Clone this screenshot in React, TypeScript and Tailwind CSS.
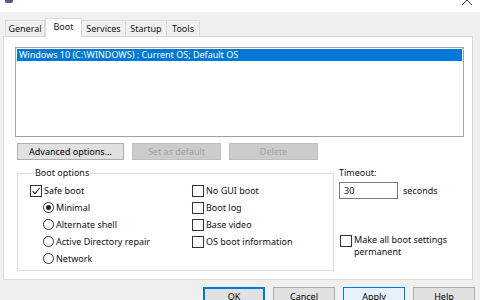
import type { ReactNode } from "react"

function CheckBox({ checked = false }: { checked?: boolean }) {
  return (
    <span className="w-[12px] h-[12px] border border-[#333333] bg-white flex items-center justify-center shrink-0">
      {checked && (
        <svg width="10" height="10" viewBox="0 0 10 10">
          <path d="M1.5 5.2 L4 7.6 L8.6 2" fill="none" stroke="#222" strokeWidth="1.1" />
        </svg>
      )}
    </span>
  )
}

function Radio({ checked = false }: { checked?: boolean }) {
  return (
    <span className="w-[11px] h-[11px] rounded-full border border-[#333333] bg-white flex items-center justify-center shrink-0">
      {checked && <span className="w-[5px] h-[5px] rounded-full bg-[#222222]" />}
    </span>
  )
}

function Row({ children }: { children: ReactNode }) {
  return <div className="h-[17px] flex items-center gap-[2px]">{children}</div>
}

function Btn({ label, w, h = "h-[17px]", kind = "normal" }: { label: string; w: string; h?: string; kind?: "normal" | "disabled" | "default" | "hover" }) {
  const styles = {
    normal: "bg-[#e1e1e1] border-[#adadad] text-black",
    disabled: "bg-[#cccccc] border-[#bfbfbf] text-[#a3a3a3]",
    default: "bg-[#e1e1e1] border-[#0078d7] border-2 text-black",
    hover: "bg-[#e5f1fb] border-[#0078d7] text-black",
  }
  return (
    <div className={`${w} ${h} border flex items-center justify-center shrink-0 ${styles[kind]}`}>
      {label}
    </div>
  )
}

export default function App() {
  return (
    <div className="w-[480px] h-[300px] overflow-hidden bg-[#f0f0f0] text-[9px] leading-[12px] text-[#111111] font-['Noto_Sans',sans-serif] flex flex-col">
      {/* title bar, mostly cropped off */}
      <div className="h-[12px] bg-white flex justify-between items-start overflow-hidden shrink-0">
        <div className="ml-[5px] w-[8px] h-[3px] bg-[#4d5b85] rounded-b-[2px]" />
        <svg width="12" height="12" viewBox="0 0 12 12" className="mr-[7px] -mt-[6px]">
          <path d="M1 1 L11 11 M11 1 L1 11" stroke="#333" strokeWidth="1" />
        </svg>
      </div>

      {/* tabs */}
      <div className="pt-[6px] pl-[5px] flex items-end h-[24px] shrink-0 relative z-10">
        <div className="w-[40px] h-[16px] border border-b-0 border-[#d9d9d9] flex items-center justify-center">General</div>
        <div className="w-[37px] h-[19px] border border-b-0 border-[#d9d9d9] bg-white flex items-center justify-center -mb-[1px] pb-[2px]">Boot</div>
        <div className="w-[44px] h-[16px] border border-b-0 border-l-0 border-[#d9d9d9] flex items-center justify-center">Services</div>
        <div className="w-[41px] h-[16px] border border-b-0 border-l-0 border-[#d9d9d9] flex items-center justify-center">Startup</div>
        <div className="w-[33px] h-[16px] border border-b-0 border-l-0 border-[#d9d9d9] flex items-center justify-center">Tools</div>
      </div>

      {/* tab panel */}
      <div className="ml-[3px] w-[470px] h-[244px] bg-white border border-[#d9d9d9] shrink-0 flex flex-col">
        <div className="mt-[10px] ml-[11px] w-[449px] h-[90px] border border-[#a0a0a0] p-[1px]">
          <div className="h-[12px] bg-[#0078d7] text-white flex items-center pl-[2px]">
            Windows 10 (C:\WINDOWS) : Current OS; Default OS
          </div>
        </div>

        <div className="mt-[6px] ml-[13px] flex gap-[8px]">
          <Btn label="Advanced options..." w="w-[107px]" />
          <Btn label="Set as default" w="w-[89px]" kind="disabled" />
          <Btn label="Delete" w="w-[89px]" kind="disabled" />
        </div>

        <div className="mt-[7px] ml-[13px] flex">
          <fieldset className="w-[317px] h-[104px] border border-[#dcdcdc] pl-[12px] pt-[3px] flex">
            <legend className="ml-[4px] px-[1px]">Boot options</legend>
            <div className="w-[162px]">
              <Row>
                <CheckBox checked />
                <span>Safe boot</span>
              </Row>
              <div className="pl-[13px]">
                <Row>
                  <Radio checked />
                  <span>Minimal</span>
                </Row>
                <Row>
                  <Radio />
                  <span>Alternate shell</span>
                </Row>
                <Row>
                  <Radio />
                  <span>Active Directory repair</span>
                </Row>
                <Row>
                  <Radio />
                  <span>Network</span>
                </Row>
              </div>
            </div>
            <div>
              <Row>
                <CheckBox />
                <span>No GUI boot</span>
              </Row>
              <Row>
                <CheckBox />
                <span>Boot log</span>
              </Row>
              <Row>
                <CheckBox />
                <span>Base video</span>
              </Row>
              <Row>
                <CheckBox />
                <span>OS boot information</span>
              </Row>
            </div>
          </fieldset>

          <div className="ml-[5px] flex flex-col">
            <div>Timeout:</div>
            <div className="mt-[3px] flex items-center gap-[5px]">
              <div className="w-[59px] h-[17px] border border-[#7a7a7a] bg-white flex items-center pl-[4px]">30</div>
              <span>seconds</span>
            </div>
            <div className="mt-[36px] ml-[1px] flex items-start gap-[2px]">
              <CheckBox />
              <span className="leading-[12px] -mt-[1px]">
                Make all boot settings
                <br />
                permanent
              </span>
            </div>
          </div>
        </div>
      </div>

      {/* dialog buttons */}
      <div className="mt-[7px] pr-[5px] flex justify-end gap-[8px]">
        <Btn label="OK" w="w-[62px]" h="h-[19px]" kind="default" />
        <Btn label="Cancel" w="w-[62px]" h="h-[19px]" />
        <Btn label="Apply" w="w-[62px]" h="h-[19px]" kind="hover" />
        <Btn label="Help" w="w-[62px]" h="h-[19px]" />
      </div>
    </div>
  )
}
